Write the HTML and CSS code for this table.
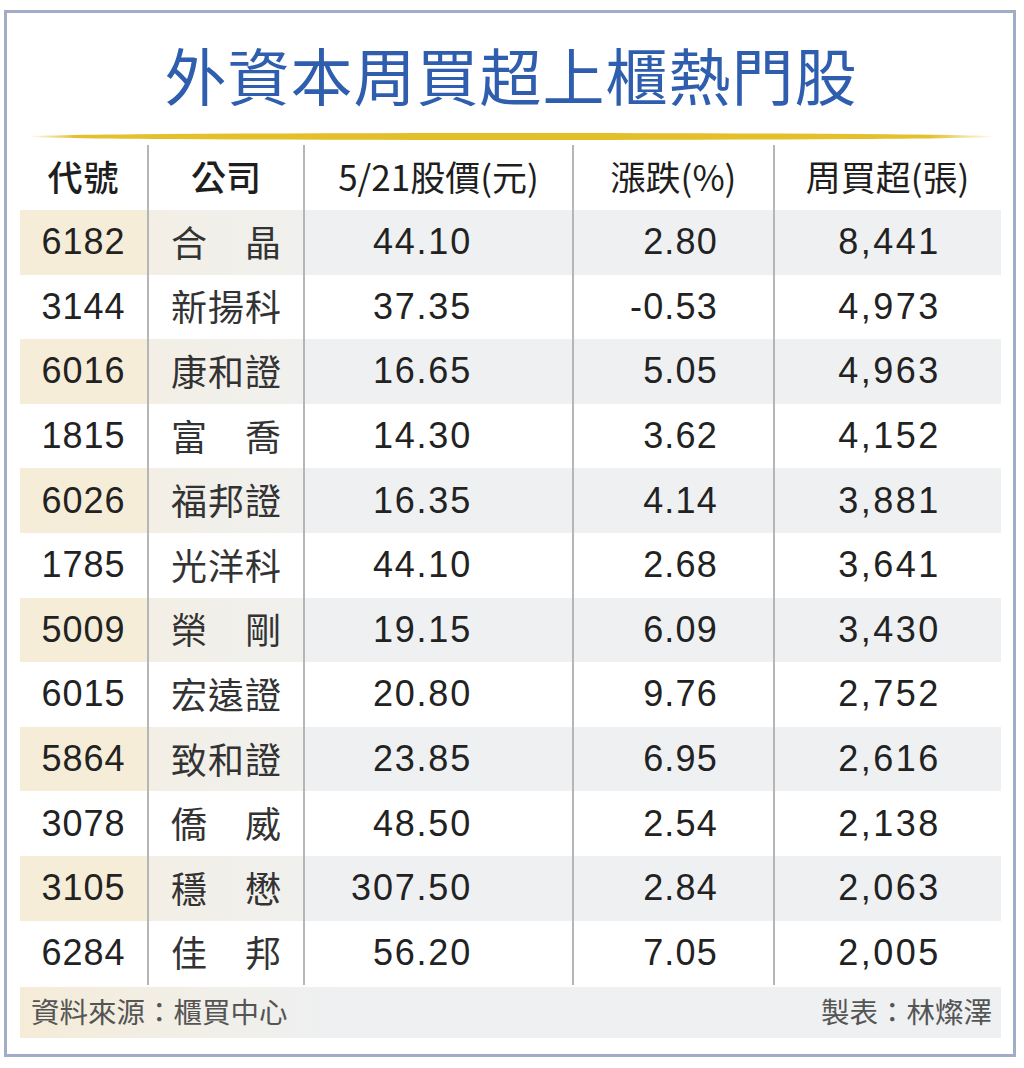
FILE: index.html
```html
<!DOCTYPE html>
<html lang="zh-Hant">
<head>
<meta charset="utf-8">
<title>外資本周買超上櫃熱門股</title>
<link rel="stylesheet" href="styles.css">
</head>
<body>
<div class="frame">
  <h1 class="title"><span>外</span><span>資</span><span>本</span><span>周</span><span>買</span><span>超</span><span>上</span><span>櫃</span><span>熱</span><span>門</span><span>股</span></h1>
  <div class="goldline"></div>
  <div class="table">
    <div class="row head">
      <div class="c code">代號</div>
      <div class="c name">公司</div>
      <div class="c price">5/21股價(元)</div>
      <div class="c chg">漲跌(%)</div>
      <div class="c buy">周買超(張)</div>
    </div>
    <div class="row alt"><div class="c code">6182</div><div class="c name"><span class="nm"><span>合</span><span>晶</span></span></div><div class="c price num">44.10</div><div class="c chg num">2.80</div><div class="c buy num">8,441</div></div>
    <div class="row"><div class="c code">3144</div><div class="c name"><span class="nm"><span>新</span><span>揚</span><span>科</span></span></div><div class="c price num">37.35</div><div class="c chg num">-0.53</div><div class="c buy num">4,973</div></div>
    <div class="row alt"><div class="c code">6016</div><div class="c name"><span class="nm"><span>康</span><span>和</span><span>證</span></span></div><div class="c price num">16.65</div><div class="c chg num">5.05</div><div class="c buy num">4,963</div></div>
    <div class="row"><div class="c code">1815</div><div class="c name"><span class="nm"><span>富</span><span>喬</span></span></div><div class="c price num">14.30</div><div class="c chg num">3.62</div><div class="c buy num">4,152</div></div>
    <div class="row alt"><div class="c code">6026</div><div class="c name"><span class="nm"><span>福</span><span>邦</span><span>證</span></span></div><div class="c price num">16.35</div><div class="c chg num">4.14</div><div class="c buy num">3,881</div></div>
    <div class="row"><div class="c code">1785</div><div class="c name"><span class="nm"><span>光</span><span>洋</span><span>科</span></span></div><div class="c price num">44.10</div><div class="c chg num">2.68</div><div class="c buy num">3,641</div></div>
    <div class="row alt"><div class="c code">5009</div><div class="c name"><span class="nm"><span>榮</span><span>剛</span></span></div><div class="c price num">19.15</div><div class="c chg num">6.09</div><div class="c buy num">3,430</div></div>
    <div class="row"><div class="c code">6015</div><div class="c name"><span class="nm"><span>宏</span><span>遠</span><span>證</span></span></div><div class="c price num">20.80</div><div class="c chg num">9.76</div><div class="c buy num">2,752</div></div>
    <div class="row alt"><div class="c code">5864</div><div class="c name"><span class="nm"><span>致</span><span>和</span><span>證</span></span></div><div class="c price num">23.85</div><div class="c chg num">6.95</div><div class="c buy num">2,616</div></div>
    <div class="row"><div class="c code">3078</div><div class="c name"><span class="nm"><span>僑</span><span>威</span></span></div><div class="c price num">48.50</div><div class="c chg num">2.54</div><div class="c buy num">2,138</div></div>
    <div class="row alt"><div class="c code">3105</div><div class="c name"><span class="nm"><span>穩</span><span>懋</span></span></div><div class="c price num">307.50</div><div class="c chg num">2.84</div><div class="c buy num">2,063</div></div>
    <div class="row"><div class="c code">6284</div><div class="c name"><span class="nm"><span>佳</span><span>邦</span></span></div><div class="c price num">56.20</div><div class="c chg num">7.05</div><div class="c buy num">2,005</div></div>
  </div>
  <div class="footer">
    <span class="src">資料來源：櫃買中心</span>
    <span class="maker">製表：林燦澤</span>
  </div>
</div>
</body>
</html>
```
FILE: styles.css
```css
html, body {
  margin: 0;
  padding: 0;
  background: #ffffff;
}

body {
  font-family: "Liberation Sans", "Noto Sans CJK TC", sans-serif;
  color: #222222;
}

.frame {
  box-sizing: border-box;
  width: 1012px;
  height: 1047px;
  margin: 10px 0 0 4px;
  border: 3px solid #a2acc8;
  padding: 0 12px 0 13px;
  background: #ffffff;
}

.title {
  margin: 0;
  height: 120px;
  padding-top: 21px;
  box-sizing: border-box;
  display: flex;
  justify-content: center;
  font-family: "Noto Sans CJK TC", sans-serif;
  font-weight: 400;
  font-size: 62px;
  line-height: 80px;
  color: #2f5eae;
}

.title span {
  display: block;
  width: 63px;
  text-align: center;
}

.goldline {
  height: 7px;
  margin-left: 7px;
  width: 970px;
  border-radius: 50%;
  background: linear-gradient(to right,
    rgba(232, 196, 40, 0) 0%,
    #e4c02c 5%,
    #e2be28 50%,
    #e4c02c 93%,
    rgba(232, 196, 40, 0) 100%);
}

.table {
  margin-top: 5px;
  display: flex;
  flex-direction: column;
}

.row {
  display: grid;
  grid-template-columns: 127px 156px 269px 201px 227px;
  height: 64.6px;
}

.row.head {
  height: 65px;
}

.c {
  display: flex;
  align-items: center;
  box-sizing: border-box;
  font-size: 36px;
  line-height: 40px;
}

.c + .c {
  border-left: 2px solid #b6b6b6;
}

.head .c {
  justify-content: center;
  font-family: "Noto Sans CJK TC", sans-serif;
  font-weight: 500;
  font-size: 35px;
  color: #1e1e1e;
  padding-bottom: 3px;
}

.head .price,
.head .chg,
.head .buy {
  font-family: "Noto Sans CJK TC", sans-serif;
  font-weight: 400;
}

.code {
  justify-content: center;
  letter-spacing: 1px;
}

.name {
  justify-content: center;
}

.nm {
  display: flex;
  justify-content: space-between;
  width: 110px;
  font-family: "Noto Sans CJK TC", sans-serif;
  font-size: 36px;
  color: #333333;
  padding-bottom: 3px;
}

.num {
  color: #222222;
}

.price.num {
  justify-content: flex-end;
  padding-right: 100px;
  letter-spacing: 1.8px;
}

.chg.num {
  justify-content: flex-end;
  padding-right: 55px;
  letter-spacing: 1.2px;
}

.buy.num {
  justify-content: center;
  padding-left: 4px;
  letter-spacing: 2.5px;
}

.row.alt {
  background: #eef0f2;
}

.row.alt .code {
  background: #f6edd9;
}

.row.alt .name {
  background: linear-gradient(to right, #f3efe6 0%, #f0f0ee 100%);
}

.footer {
  margin-top: 2px;
  height: 51px;
  display: flex;
  align-items: center;
  justify-content: space-between;
  padding: 0 9px 4px 11px;
  box-sizing: border-box;
  background: linear-gradient(to right, #f5ecd8 0px, #f1efe8 180px, #eef0f2 320px, #eef0f2 100%);
  font-family: "Noto Sans CJK TC", sans-serif;
  font-size: 28.5px;
  line-height: 32px;
  color: #555555;
}
```
